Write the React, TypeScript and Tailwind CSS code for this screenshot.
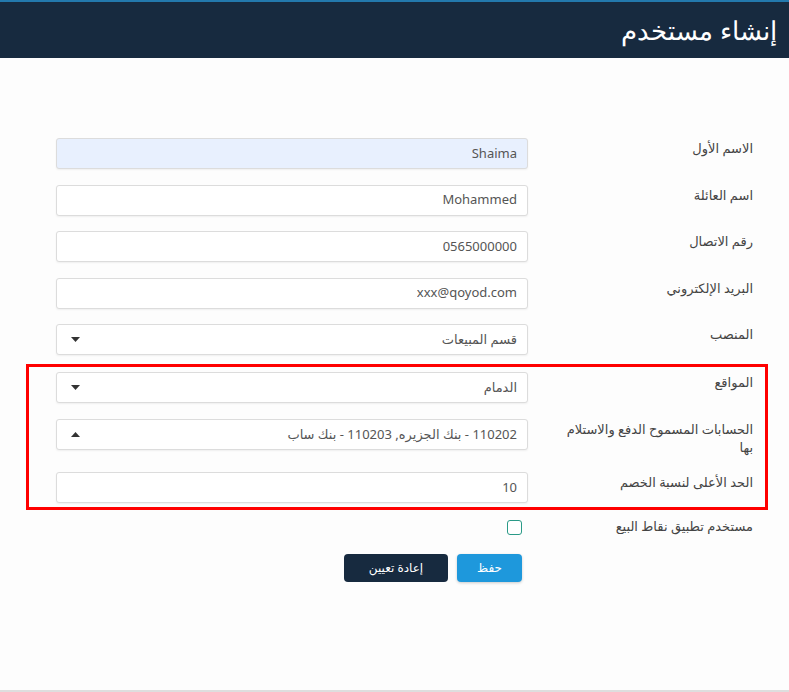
import { FC, ReactNode } from 'react';

type Field = {
  label: string;
  value: string;
  kind?: 'input' | 'select';
  caret?: 'down' | 'up';
  autofill?: boolean;
};

const topFields: Field[] = [
  { label: 'الاسم الأول', value: 'Shaima', autofill: true },
  { label: 'اسم العائلة', value: 'Mohammed' },
  { label: 'رقم الاتصال', value: '0565000000' },
  { label: 'البريد الإلكتروني', value: 'xxx@qoyod.com' },
  { label: 'المنصب', value: 'قسم المبيعات', kind: 'select', caret: 'down' },
];

const boxedFields: Field[] = [
  { label: 'المواقع', value: 'الدمام', kind: 'select', caret: 'down' },
  {
    label: 'الحسابات المسموح الدفع والاستلام بها',
    value: '110202 - بنك الجزيره, 110203 - بنك ساب',
    kind: 'select',
    caret: 'up',
  },
  { label: 'الحد الأعلى لنسبة الخصم', value: '10' },
];

const Caret: FC<{ dir: 'down' | 'up' }> = ({ dir }) => (
  <svg width="9" height="5" viewBox="0 0 9 5" className="fill-[#333]">
    {dir === 'down' ? <path d="M0 0h9L4.5 5z" /> : <path d="M0 5h9L4.5 0z" />}
  </svg>
);

const Row: FC<{ label: string; children: ReactNode }> = ({ label, children }) => (
  <div className="flex items-start gap-[37px]">
    <label className="w-[188px] shrink-0 pt-[1px] text-[13px] leading-[18px] text-[#444]">
      {label}
    </label>
    <div className="flex-1">{children}</div>
  </div>
);

const FieldBox: FC<{ field: Field }> = ({ field }) => (
  <div
    className={`flex h-[31px] items-center justify-between rounded-[3px] border border-[#dcdcdc] pr-[10px] pl-[14px] text-[13px] text-[#555] shadow-[0_1px_2px_rgba(0,0,0,0.06)] ${
      field.autofill ? 'bg-[#e8f0fe]' : 'bg-white'
    }`}
  >
    <span className="truncate">{field.value}</span>
    {field.kind === 'select' && field.caret && <Caret dir={field.caret} />}
  </div>
);

export default function App() {
  return (
    <div
      dir="rtl"
      className="flex h-[692px] flex-col border-b-2 border-[#dedede] bg-[#fdfdfd] font-['Noto_Sans','DejaVu_Sans',sans-serif]"
    >
      <header className="flex h-[58px] shrink-0 items-center border-t-2 border-[#2379ad] bg-[#172a3f] pr-[12px]">
        <h1 className="text-[26px] font-light text-white">إنشاء مستخدم</h1>
      </header>

      <form className="flex flex-col pt-[80px] pr-[36px] pl-[56px]">
        <div className="flex flex-col gap-[15.5px]">
          {topFields.map((f) => (
            <Row key={f.label} label={f.label}>
              <FieldBox field={f} />
            </Row>
          ))}
        </div>

        <div className="mt-[9px] mr-[-15px] ml-[-30px] flex flex-col gap-[16px] border-[3px] border-[#f00] pt-[5px] pr-[12px] pb-[4px] pl-[27px]">
          {boxedFields.map((f) => (
            <Row key={f.label} label={f.label}>
              <FieldBox field={f} />
            </Row>
          ))}
        </div>

        <div className="mt-[7px] flex items-start gap-[37px]">
          <label className="w-[188px] shrink-0 text-[13px] leading-[19px] text-[#444]">
            مستخدم تطبيق نقاط البيع
          </label>
          <div className="flex-1 pt-[3px] pr-[6px]">
            <span className="block h-[15px] w-[15px] rounded-[3px] border-[1.5px] border-[#2a9a87] bg-white" />
          </div>
        </div>

        <div className="mt-[18px] flex gap-[37px]">
          <div className="w-[188px] shrink-0" />
          <div className="flex flex-1 gap-[9px] pr-[6px]">
            <button
              type="button"
              className="h-[28px] w-[65px] rounded-[4px] bg-[#1e98dc] text-[12px] text-white shadow-[0_1px_3px_rgba(0,0,0,0.2)]"
            >
              حفظ
            </button>
            <button
              type="button"
              className="h-[28px] w-[104px] rounded-[4px] bg-[#172a3f] text-[12px] text-white"
            >
              إعادة تعيين
            </button>
          </div>
        </div>
      </form>
    </div>
  );
}
